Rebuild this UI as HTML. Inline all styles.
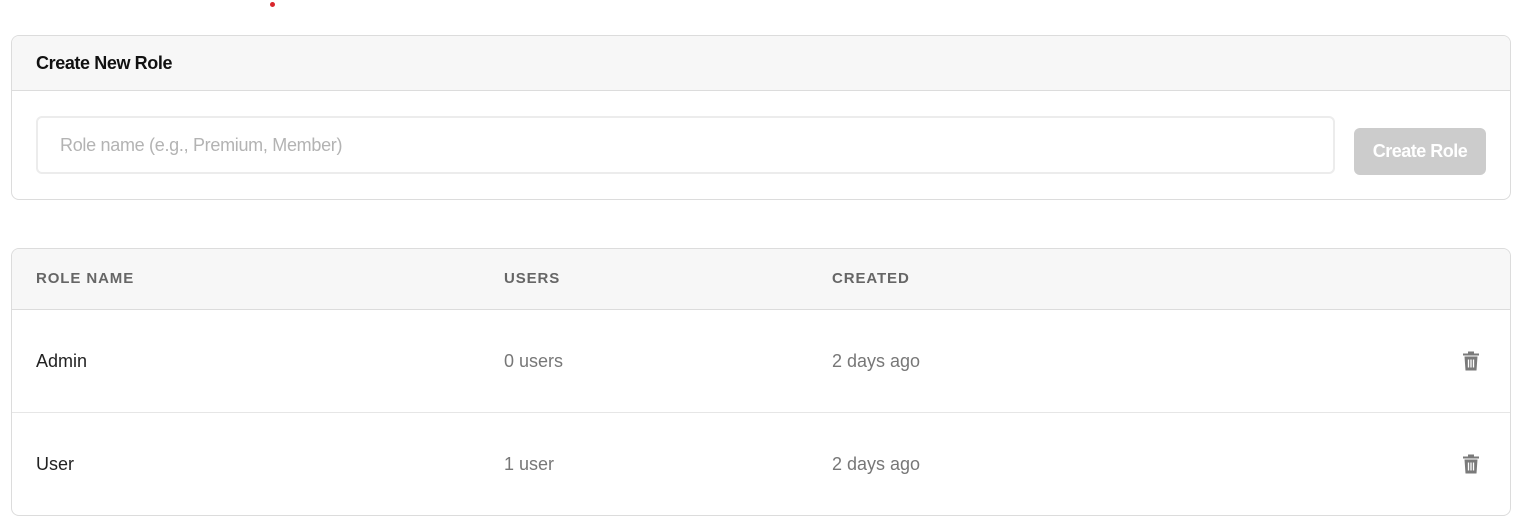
<!DOCTYPE html>
<html><head><style>
body{margin:0;width:1522px;height:526px;background:#fff;font-family:"Liberation Sans",sans-serif;position:relative;overflow:hidden}
.abs{position:absolute}
.card{position:absolute;left:11px;width:1498px;border:1px solid #dcdcdc;border-radius:8px;overflow:hidden;background:#fff}
.t{position:absolute;white-space:nowrap}
</style></head><body>
<div class="abs" style="left:270px;top:2px;width:5px;height:5px;border-radius:50%;background:#d9262c"></div>
<div class="card" style="top:35px;height:163px">
 <div class="abs" style="left:0;top:0;width:1498px;height:54px;background:#f7f7f7;border-bottom:1px solid #dcdcdc"></div>
 <div class="t" style="left:24px;top:17px;font-size:18px;font-weight:bold;color:#111;letter-spacing:-0.4px">Create New Role</div>
 <div class="abs" style="left:24px;top:80px;width:1295px;height:54px;border:2px solid #ececec;border-radius:6px"></div>
 <div class="t" style="left:48px;top:99px;font-size:18px;color:#b3b3b3;letter-spacing:-0.3px">Role name (e.g., Premium, Member)</div>
 <div class="abs" style="left:1342px;top:92px;width:132px;height:47px;background:#cccccc;border-radius:6px;color:#fff;font-size:18px;font-weight:bold;text-align:center;line-height:47px;letter-spacing:-0.5px">Create Role</div>
</div>
<div class="card" style="top:248px;height:266px">
 <div class="abs" style="left:0;top:0;width:1498px;height:60px;background:#f7f7f7;border-bottom:1px solid #dcdcdc"></div>
 <div class="t" style="left:24px;top:21px;font-size:15px;font-weight:bold;color:#666;letter-spacing:0.9px">ROLE NAME</div>
 <div class="t" style="left:492px;top:21px;font-size:15px;font-weight:bold;color:#666;letter-spacing:0.9px">USERS</div>
 <div class="t" style="left:820px;top:21px;font-size:15px;font-weight:bold;color:#666;letter-spacing:0.9px">CREATED</div>
 <div class="abs" style="left:0;top:163px;width:1498px;height:1px;background:#e6e6e6"></div>
 <div class="t" style="left:24px;top:102px;font-size:18px;color:#222">Admin</div>
 <div class="t" style="left:492px;top:102px;font-size:18px;color:#777">0 users</div>
 <div class="t" style="left:820px;top:102px;font-size:18px;color:#777">2 days ago</div>
 <div class="t" style="left:24px;top:205px;font-size:18px;color:#222">User</div>
 <div class="t" style="left:492px;top:205px;font-size:18px;color:#777">1 user</div>
 <div class="t" style="left:820px;top:205px;font-size:18px;color:#777">2 days ago</div>
 <svg class="abs" style="left:1450px;top:101px" width="18" height="22" viewBox="0 0 18 21"><path d="M1 3h16v2H1zM6 1h6v2H6z M2.5 6h13l-1 14h-11z" fill="#7a7a7a"/><path d="M6.5 9v8M9 9v8M11.5 9v8" stroke="#fff" stroke-width="1.3"/></svg>
 <svg class="abs" style="left:1450px;top:204px" width="18" height="22" viewBox="0 0 18 21"><path d="M1 3h16v2H1zM6 1h6v2H6z M2.5 6h13l-1 14h-11z" fill="#7a7a7a"/><path d="M6.5 9v8M9 9v8M11.5 9v8" stroke="#fff" stroke-width="1.3"/></svg>
</div>
</body></html>
